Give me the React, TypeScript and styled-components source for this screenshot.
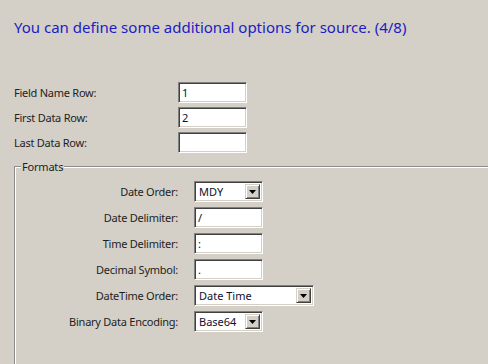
import React from "react";
import styled, { createGlobalStyle } from "styled-components";

const Global = createGlobalStyle`
  html, body { margin: 0; padding: 0; background: #d4d0c8; overflow: hidden; }
  body { width: 488px; height: 364px; font-family: "Noto Sans", sans-serif; }
`;

const Page = styled.div`
  width: 488px;
  height: 364px;
  overflow: hidden;
  box-sizing: border-box;
  padding: 17px 0 0 14px;
  background: #d4d0c8;
  font-family: "Noto Sans", sans-serif;
  font-size: 11px;
  color: #1e1e1e;
`;

const Title = styled.h1`
  margin: 0;
  font-size: 15px;
  font-weight: 400;
  line-height: 20px;
  color: #1c1cc4;
  white-space: nowrap;
`;

const RowsGrid = styled.div`
  display: grid;
  grid-template-columns: 164px 69px;
  row-gap: 4px;
  align-items: center;
  margin-top: 45px;
`;

const Label = styled.span<{ $right?: boolean }>`
  font-size: 11px;
  line-height: 15px;
  letter-spacing: -0.25px;
  white-space: nowrap;
  justify-self: ${(p) => (p.$right ? "end" : "start")};
`;

const sunken = `
  box-sizing: border-box;
  height: 21px;
  border: 1px solid;
  border-color: #808080 #ffffff #ffffff #808080;
  box-shadow: inset 1px 1px 0 #404040, inset -1px -1px 0 #d4d0c8;
  background: #ffffff;
`;

const TextBox = styled.input<{ $w: number }>`
  ${sunken}
  width: ${(p) => p.$w}px;
  margin: 0;
  padding: 0 3px;
  font-family: "Noto Sans", sans-serif;
  font-size: 11px;
  color: #101030;
  outline: none;
`;

const Group = styled.fieldset`
  box-sizing: border-box;
  width: 520px;
  height: 260px;
  margin: 6px 0 0 0;
  padding: 0 0 0 6px;
  border: 1px solid;
  border-color: #8c8c8c #ffffff #ffffff #8c8c8c;
  box-shadow: inset 1px 1px 0 #ffffff;
`;

const GroupTitle = styled.legend`
  padding: 0 1px;
  font-size: 11px;
  line-height: 15px;
  letter-spacing: -0.2px;
  background: #d4d0c8;
  color: #1e1e1e;
`;

const FormatsGrid = styled.div`
  display: grid;
  grid-template-columns: 157px auto;
  column-gap: 16px;
  row-gap: 5px;
  align-items: center;
  margin-top: 7px;
`;

const Combo = styled.div<{ $w: number }>`
  ${sunken}
  width: ${(p) => p.$w}px;
  display: flex;
  align-items: stretch;
  padding: 2px;
  justify-self: start;
`;

const ComboText = styled.span`
  flex: 1;
  display: flex;
  align-items: center;
  padding-left: 2px;
  font-size: 11px;
  color: #101030;
  white-space: nowrap;
`;

const ComboButton = styled.span`
  box-sizing: border-box;
  width: 15px;
  display: flex;
  align-items: center;
  justify-content: center;
  background: #d4d0c8;
  border: 1px solid;
  border-color: #d4d0c8 #404040 #404040 #d4d0c8;
  box-shadow: inset 1px 1px 0 #ffffff, inset -1px -1px 0 #808080;
`;

const Arrow = () => (
  <svg width="7" height="4" viewBox="0 0 7 4">
    <polygon points="0,0 7,0 3.5,4" fill="#000" />
  </svg>
);

const Select = ({ value, width }: { value: string; width: number }) => (
  <Combo $w={width}>
    <ComboText>{value}</ComboText>
    <ComboButton>
      <Arrow />
    </ComboButton>
  </Combo>
);

export default function App() {
  return (
    <>
      <Global />
      <Page>
        <Title>You can define some additional options for source. (4/8)</Title>
        <RowsGrid>
          <Label>Field Name Row:</Label>
          <TextBox $w={69} defaultValue="1" />
          <Label>First Data Row:</Label>
          <TextBox $w={69} defaultValue="2" />
          <Label>Last Data Row:</Label>
          <TextBox $w={69} defaultValue="" />
        </RowsGrid>
        <Group>
          <GroupTitle>Formats</GroupTitle>
          <FormatsGrid>
            <Label $right>Date Order:</Label>
            <Select value="MDY" width={69} />
            <Label $right>Date Delimiter:</Label>
            <TextBox $w={69} defaultValue="/" />
            <Label $right>Time Delimiter:</Label>
            <TextBox $w={69} defaultValue=":" />
            <Label $right>Decimal Symbol:</Label>
            <TextBox $w={69} defaultValue="." />
            <Label $right>DateTime Order:</Label>
            <Select value="Date Time" width={120} />
            <Label $right>Binary Data Encoding:</Label>
            <Select value="Base64" width={69} />
          </FormatsGrid>
        </Group>
      </Page>
    </>
  );
}
